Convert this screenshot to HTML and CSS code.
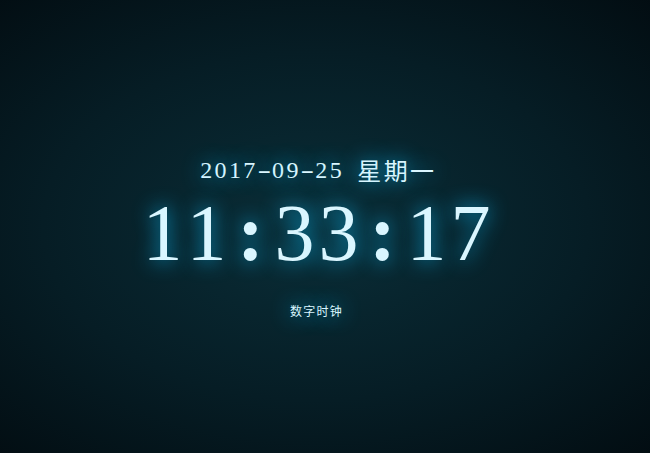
FILE: index.html
```html
<!DOCTYPE html>
<html lang="zh-CN">
<head>
<meta charset="utf-8">
<title>数字时钟</title>
<link rel="stylesheet" href="styles.css">
</head>
<body>
<main class="stage">
  <div class="clock">
    <p class="date"><span class="c">2</span><span class="c">0</span><span class="c">1</span><span class="c">7</span><span class="c h">-</span><span class="c">0</span><span class="c">9</span><span class="c h">-</span><span class="c">2</span><span class="c">5</span><span class="c"> </span><span class="w">星</span><span class="w">期</span><span class="w">一</span></p>
    <p class="time"><span class="c">1</span><span class="c">1</span><span class="c k">:</span><span class="c">3</span><span class="c">3</span><span class="c k">:</span><span class="c">1</span><span class="c">7</span></p>
    <p class="text">数字时钟</p>
  </div>
</main>
</body>
</html>
```

FILE: styles.css
```css
html, body {
  margin: 0;
  padding: 0;
  height: 100%;
}

body {
  background: #010407;
  background: radial-gradient(ellipse 120% 110% at 316px 226px, #0a2e38 0%, #061d25 35%, #000306 80%);
  overflow: hidden;
}

.stage {
  box-sizing: border-box;
  height: 453px;
  padding: 158px 17px 0 0;
  display: flex;
  flex-direction: column;
  align-items: center;
}

.clock {
  display: flex;
  flex-direction: column;
  align-items: center;
  color: #daf6ff;
  text-shadow: 0 0 20px rgba(10, 175, 230, 1), 0 0 20px rgba(10, 175, 230, 0);
  font-family: "Liberation Serif", "Noto Sans CJK SC", serif;
}

.clock p {
  margin: 0;
  white-space: pre;
}

.date {
  font-size: 24px;
  line-height: 24px;
  display: flex;
}

.date .c {
  display: inline-block;
  width: 14.4px;
  text-align: center;
}

.date .h {
  transform: scaleX(1.7);
}

.date .w {
  display: inline-block;
  width: 26.4px;
  text-align: left;
  font-family: "Noto Sans CJK SC", sans-serif;
  font-size: 24px;
}

.date .w:last-child {
  width: 24px;
}

.time {
  margin-top: 11px !important;
  font-size: 80px;
  line-height: 80px;
  display: flex;
}

.time .c {
  display: inline-block;
  width: 44px;
  text-align: center;
}

.time .k {
  font-weight: bold;
}

.text {
  margin-top: 32px !important;
  font-family: "Noto Sans CJK SC", sans-serif;
  font-size: 12px;
  line-height: 12px;
  letter-spacing: 0.1em;
}
```
